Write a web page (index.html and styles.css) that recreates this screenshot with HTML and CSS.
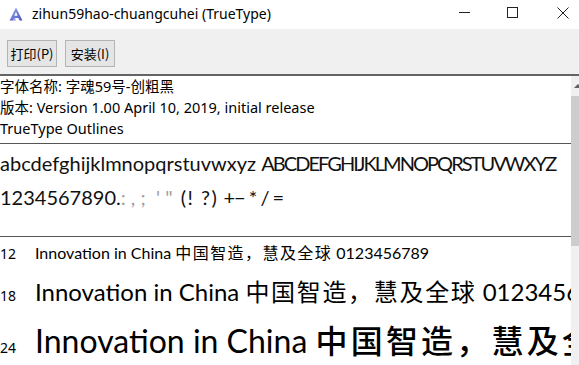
FILE: index.html
```html
<!DOCTYPE html>
<html>
<head>
<meta charset="utf-8">
<link rel="stylesheet" href="styles.css">
</head>
<body>
<div class="window">
  <div class="titlebar">
    <svg class="appicon" width="14" height="14" viewBox="0 0 14 14">
      <defs>
        <linearGradient id="g1" x1="0" y1="0" x2="1" y2="1">
          <stop offset="0" stop-color="#9ab2ee"/>
          <stop offset="1" stop-color="#4a52c4"/>
        </linearGradient>
      </defs>
      <path d="M7 0.5 L13.5 13.5 L10.5 13.5 L9.3 11 L4.7 11 L3.5 13.5 L0.5 13.5 Z" fill="url(#g1)"/>
      <path d="M7 5 L8.6 8.8 L5.4 8.8 Z" fill="#ffffff"/>
      <path d="M1 13.5 L5 9 L7 13.5 Z" fill="#6a6ed8" opacity="0.7"/>
    </svg>
    <span class="title">zihun59hao-chuangcuhei (TrueType)</span>
    <div class="controls">
      <span class="ctl min"></span>
      <span class="ctl max"></span>
      <svg class="ctl close" width="12" height="12" viewBox="0 0 12 12"><path d="M0.5 0.5 L11.5 11.5 M11.5 0.5 L0.5 11.5" stroke="#222" stroke-width="1"/></svg>
    </div>
  </div>
  <div class="toolbar">
    <button class="btn">打印(P)</button>
    <button class="btn">安装(I)</button>
  </div>
  <div class="content">
    <div class="main">
      <div class="info">
        <div>字体名称: 字魂59号-创粗黑</div>
        <div>版本: Version 1.00 April 10, 2019, initial release</div>
        <div>TrueType Outlines</div>
      </div>
      <div class="samples">
        <div class="sline">abcdefghijklmnopqrstuvwxyz <span class="caps">ABCDEFGHIJKLMNOPQRSTUVWXYZ</span></div>
        <div class="sline">1234567890.<span class="faint">: , ; &nbsp;' " </span><span class="par">(! ?)</span> <span class="ops">+− * / =</span></div>
      </div>
      <div class="sizes">
        <div class="row r12"><span class="lbl">12</span><span class="txt">Innovation in China <span class="cjk">中国智造，慧及全球</span> 0123456789</span></div>
        <div class="row r18"><span class="lbl">18</span><span class="txt">Innovation in China <span class="cjk">中国智造，慧及全球</span> 0123456789</span></div>
        <div class="row r24"><span class="lbl">24</span><span class="txt">Innovation in China <span class="cjk">中国智造，慧及全球</span> 0123456789</span></div>
      </div>
    </div>
    <div class="scrollbar">
      <div class="arrow"><span class="tri"></span></div>
      <div class="thumb"></div>
    </div>
  </div>
</div>
</body>
</html>
```
FILE: styles.css
```css
html, body {
  margin: 0;
  padding: 0;
  background: #ffffff;
  overflow: hidden;
}
.window {
  width: 579px;
  height: 365px;
  display: flex;
  flex-direction: column;
  font-family: "Noto Sans", "Noto Sans CJK SC", sans-serif;
  color: #000;
}
.titlebar {
  height: 29px;
  display: flex;
  align-items: center;
  background: #fff;
  flex-shrink: 0;
}
.appicon {
  margin-left: 9px;
  margin-top: -2px;
}
.title {
  margin-left: 9px;
  font-size: 14px;
  margin-top: -3px;
  color: #000;
}
.controls {
  margin-left: auto;
  display: flex;
  align-items: center;
  margin-top: -4px;
}
.ctl {
  display: block;
}
.min {
  width: 11px;
  height: 1px;
  background: #222;
  margin-right: 37px;
}
.max {
  width: 9px;
  height: 9px;
  border: 1px solid #222;
  margin-right: 39px;
}
.close {
  margin-right: 10px;
}
.toolbar {
  height: 47px;
  background: #f0f0f0;
  display: flex;
  align-items: flex-start;
  padding: 11px 0 0 7px;
  box-sizing: border-box;
  gap: 8px;
  flex-shrink: 0;
  border-bottom: 2px solid #646464;
}
.btn {
  height: 27px;
  padding: 0 1px;
  border: 1px solid #b4b4b4;
  background: #e5e5e5;
  font-family: "Noto Sans CJK SC", sans-serif;
  font-size: 13px;
  color: #000;
  margin: 0;
  min-width: 50px;
  line-height: 25px;
}
.content {
  flex: 1;
  display: flex;
  min-height: 0;
}
.main {
  flex: 1;
  min-width: 0;
  overflow: hidden;
}
.info {
  font-size: 14.5px;
  line-height: 21px;
  padding-top: 0;
  padding-bottom: 4px;
  border-bottom: 1px solid #555;
}
.samples {
  font-family: "Lato", "Noto Sans CJK SC", sans-serif;
  font-size: 20px;
  line-height: 34px;
  padding-top: 2px;
  padding-bottom: 22px;
  border-bottom: 1px solid #555;
  white-space: nowrap;
  color: #111;
}
.caps {
  letter-spacing: -1.95px;
}
.faint {
  color: #a0a0a0;
}
.par {
  letter-spacing: 1.5px;
  margin-left: 3px;
}
.ops {
  letter-spacing: -1px;
}
.row {
  display: flex;
  align-items: baseline;
  white-space: nowrap;
}
.lbl {
  width: 35px;
  flex-shrink: 0;
  font-size: 14px;
  font-family: "Noto Sans", sans-serif;
}
.txt {
  font-family: "Lato", "Noto Sans CJK SC", sans-serif;
}
.cjk {
  font-family: "Noto Sans CJK SC", sans-serif;
  letter-spacing: 0.09em;
}
.r12 { height: 36px; padding-top: 3px; box-sizing: border-box; }
.r12 .txt { font-size: 16px; }
.r18 .txt { font-size: 24px; }
.r18 .cjk { font-weight: 400; letter-spacing: 0.07em; }
.r24 { margin-top: 8px; }
.r24 .txt { font-size: 32px; }
.r24 .cjk { font-weight: 500; letter-spacing: 0.1em; }
.scrollbar {
  width: 8px;
  background: #f0f0f0;
  flex-shrink: 0;
  display: flex;
  flex-direction: column;
}
.arrow {
  height: 20px;
  padding-top: 8px;
  padding-left: 3px;
  box-sizing: border-box;
}
.tri {
  display: block;
  width: 0;
  height: 0;
  border-left: 4px solid transparent;
  border-right: 4px solid transparent;
  border-bottom: 4px solid #606060;
}
.thumb {
  height: 150px;
  background: #cdcdcd;
}
```
